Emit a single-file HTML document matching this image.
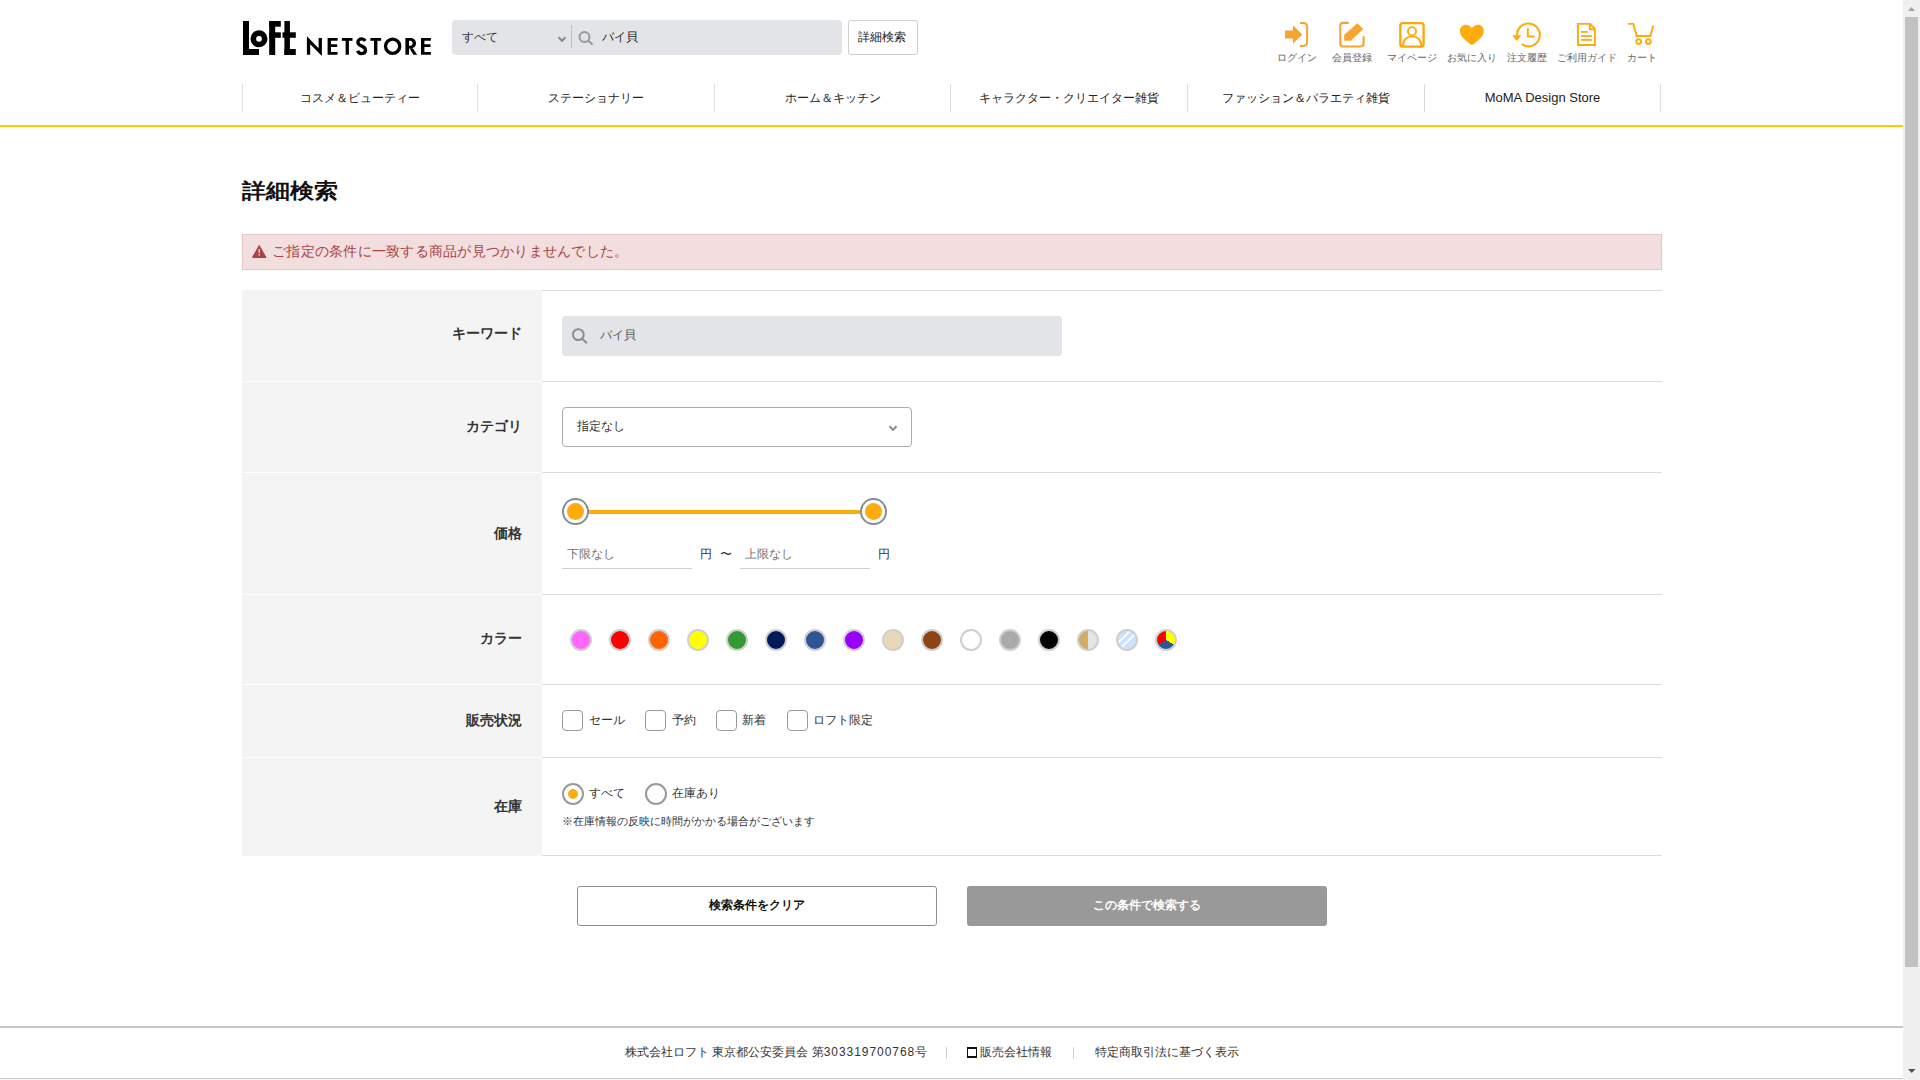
<!DOCTYPE html>
<html lang="ja"><head><meta charset="utf-8"><title>詳細検索</title>
<style>
*{box-sizing:border-box;margin:0;padding:0}
html,body{width:1920px;height:1080px;overflow:hidden;background:#fff}
body{position:relative;font-family:"Liberation Sans",sans-serif;color:#222}
.a{position:absolute}
.t{position:absolute;white-space:nowrap;line-height:20px}
svg{position:absolute;overflow:visible}
.nav-i{position:absolute;top:84px;height:28px;border-left:1px solid #dcdcdc}
.lbl{position:absolute;left:242px;width:300px;background:#f4f4f4}
.lt{position:absolute;right:1398px;font-size:14px;font-weight:bold;line-height:20px;color:#333;white-space:nowrap;text-align:right}
.rb{position:absolute;left:542px;width:1120px;height:1px;background:#dddddd}
.sw{position:absolute;top:629px;width:22px;height:22px;border-radius:50%;border:2px solid #cfcfcf;overflow:hidden}
.cb{position:absolute;top:710px;width:21px;height:21px;border:1.5px solid #9a9a9a;border-radius:4px;background:#fff}
.ct{font-size:12px;color:#333}
.fi{position:absolute;top:1046px}
</style></head><body>

<!-- scrollbar -->
<div class="a" style="left:1903px;top:0;width:17px;height:1080px;background:#f0f0f0"></div>
<div class="a" style="left:1905px;top:17px;width:13px;height:950px;background:#c1c1c1"></div>
<svg style="left:0;top:0" width="1920" height="1080">
  <polygon points="1908,11 1915,11 1911.5,7" fill="#a3a3a3"/>
  <polygon points="1908,1069 1915.5,1069 1911.75,1073" fill="#505050"/>
</svg>

<!-- logo -->
<svg style="left:0;top:0" width="440" height="70">
  <g fill="#000">
    <rect x="243" y="21" width="6" height="34"/>
    <rect x="243" y="49" width="16" height="6"/>
    <circle cx="259" cy="38.8" r="5.7" fill="none" stroke="#000" stroke-width="5.6"/>
    <rect x="269.2" y="21" width="6" height="34"/>
    <rect x="269.2" y="21" width="11.6" height="5.7"/>
    <rect x="269.2" y="32.3" width="11.6" height="5.5"/>
    <rect x="284.4" y="21" width="5.5" height="34"/>
    <rect x="282.5" y="32.3" width="13.3" height="5.5"/>
    <rect x="284.4" y="49" width="11.4" height="6"/>
    <!-- NETSTORE -->
    <polygon points="306.9,54.8 306.9,36.2 318.6,48.2 318.6,38 321.9,38 321.9,55.9 310.2,44.2 310.2,54.8"/>
    <polygon points="327.6,38 337.6,38 337.6,40.8 331,40.8 331,44.2 337.2,44.2 337.2,46.9 331,46.9 331,51.9 337.6,51.9 337.6,54.8 327.6,54.8"/>
    <rect x="341.9" y="38" width="10.6" height="2.8"/><rect x="345.6" y="38" width="3.3" height="16.8"/>
    <rect x="370.4" y="38" width="10.7" height="2.8"/><rect x="374" y="38" width="3.4" height="16.8"/>
    <circle cx="392.65" cy="46.25" r="7.1" fill="none" stroke="#000" stroke-width="3.3"/>
    <path d="M405.4,54.8 V38 H410.5 C414,38 416,40.3 416,43.2 C416,46.1 414,48.4 410.5,48.4 H409 V54.8 Z M409,40.8 V45.8 H410.3 C411.8,45.8 412.6,44.7 412.6,43.3 C412.6,41.9 411.8,40.8 410.3,40.8 Z" fill-rule="evenodd"/>
    <polygon points="409.5,48.2 412.8,48.2 417.2,54.8 413.4,54.8"/>
    <polygon points="421,38 430.9,38 430.9,40.8 424.4,40.8 424.4,44.2 430.5,44.2 430.5,46.9 424.4,46.9 424.4,51.9 430.9,51.9 430.9,54.8 421,54.8"/>
  </g>
  <path d="M365.3,40.8 C364.5,39.6 363.2,38.95 361.6,38.95 C359.4,38.95 357.9,40.4 357.9,42.3 C357.9,44.5 359.6,45.3 361.8,46.1 C364.2,47 365.45,48.2 365.45,50.3 C365.45,52.4 363.8,53.55 361.6,53.55 C359.6,53.55 358.2,52.4 357.7,50.8" fill="none" stroke="#000" stroke-width="3.3"/>
</svg>

<!-- search bar -->
<div class="a" style="left:452px;top:20px;width:390px;height:35px;background:#e3e4e8;border-radius:4px"></div>
<div class="t" style="left:462px;top:27px;font-size:12px;color:#333">すべて</div>
<div class="a" style="left:571px;top:25px;width:1px;height:23px;background:#bdbdbf"></div>
<div class="t" style="left:602px;top:27px;font-size:12px;color:#222">バイ貝</div>
<div class="a" style="left:848px;top:20px;width:70px;height:35px;background:#fff;border:1px solid #cfcfcf;border-radius:3px"></div>
<div class="t" style="left:858px;top:27px;font-size:12px;color:#222">詳細検索</div>
<svg style="left:0;top:0" width="1000" height="70">
  <polyline points="558.5,37.3 562,40.8 565.5,37.3" fill="none" stroke="#888" stroke-width="2"/>
  <circle cx="584.5" cy="36.9" r="5" fill="none" stroke="#999" stroke-width="2"/>
  <line x1="588.3" y1="40.7" x2="592.6" y2="44.6" stroke="#999" stroke-width="2"/>
</svg>

<!-- header icons -->
<svg style="left:0;top:0" width="1700" height="70">
  <g fill="#f5a52f">
    <rect x="1285" y="30.5" width="8.5" height="8"/>
    <polygon points="1293,25.3 1302.3,34.5 1293,43.7"/>
  </g>
  <path d="M1300,22.9 H1303 Q1307.1,22.9 1307.1,27 V41.9 Q1307.1,46 1303,46 H1300" fill="none" stroke="#f5a52f" stroke-width="2"/>
  <path d="M1348.8,22.9 H1343.2 Q1340.3,22.9 1340.3,25.8 V43.6 Q1340.3,46.5 1343.2,46.5 H1360.7 Q1363.6,46.5 1363.6,43.6 V36.3" fill="none" stroke="#f5a52f" stroke-width="2.1"/>
  <polygon points="1357.4,23.2 1363.2,28.9 1350.7,40.7 1344.2,40.7 1344.2,34.8" fill="#f5a52f"/>
  <rect x="1400.3" y="23.1" width="23.3" height="23.6" rx="2.5" fill="none" stroke="#ffa602" stroke-width="2.3"/>
  <circle cx="1412" cy="31.2" r="4.1" fill="none" stroke="#ffa602" stroke-width="1.8"/>
  <path d="M1403,46 C1403,40 1407,36.4 1412.2,36.4 C1417.4,36.4 1421.4,40 1421.4,46" fill="none" stroke="#ffa602" stroke-width="1.9"/>
  <path d="M1471.9,28.2 C1470.5,26 1468.3,24.7 1465.8,24.7 C1462.5,24.7 1459.9,27.3 1459.9,31 C1459.9,34.5 1462,37 1465,39.8 L1470,44 C1471.1,44.9 1472.7,44.9 1473.8,44 L1478.8,39.8 C1481.8,37 1483.8,34.5 1483.8,31 C1483.8,27.3 1481.2,24.7 1478,24.7 C1475.5,24.7 1473.3,26 1471.9,28.2 Z" fill="#ffaa0d"/>
  <path d="M1517.05,35.5 A11.4,11.4 0 1 1 1521.8,44.2" fill="none" stroke="#ffaa0d" stroke-width="2.1"/>
  <polygon points="1512.2,35.2 1521.3,35.2 1516.6,40.9" fill="#ffaa0d"/>
  <polyline points="1527.9,28 1527.9,36.5 1534.7,36.5" fill="none" stroke="#ffaa0d" stroke-width="1.9"/>
  <path d="M1577.95,23.85 H1590 L1594.85,28.6 V44.95 H1577.95 Z" fill="none" stroke="#ffaa0d" stroke-width="1.9" stroke-linejoin="miter"/>
  <path d="M1590,23.9 V29.2 H1595" fill="none" stroke="#ffaa0d" stroke-width="1.9"/>
  <g stroke="#ffaa0d" stroke-width="1.8">
    <line x1="1581" y1="31.9" x2="1587.8" y2="31.9"/>
    <line x1="1581" y1="36" x2="1591.8" y2="36"/>
    <line x1="1581" y1="39.9" x2="1591.8" y2="39.9"/>
  </g>
  <polyline points="1628.1,23.9 1633.3,23.9 1636.8,36.05 1650.4,36.05 1653.2,25.5" fill="none" stroke="#ffaa0d" stroke-width="1.9"/>
  <circle cx="1638.7" cy="41.6" r="2.4" fill="none" stroke="#ffaa0d" stroke-width="1.9"/>
  <circle cx="1648.4" cy="41.6" r="2.4" fill="none" stroke="#ffaa0d" stroke-width="1.9"/>
</svg>
<div class="t" style="left:1277px;top:48px;font-size:10px;color:#666">ログイン</div>
<div class="t" style="left:1332px;top:48px;font-size:10px;color:#666">会員登録</div>
<div class="t" style="left:1387px;top:48px;font-size:10px;color:#666">マイページ</div>
<div class="t" style="left:1447px;top:48px;font-size:10px;color:#666">お気に入り</div>
<div class="t" style="left:1507px;top:48px;font-size:10px;color:#666">注文履歴</div>
<div class="t" style="left:1557px;top:48px;font-size:10px;color:#666">ご利用ガイド</div>
<div class="t" style="left:1627px;top:48px;font-size:10px;color:#666">カート</div>

<!-- nav -->
<div class="a" style="left:242px;top:84px;width:1px;height:28px;background:#dcdcdc"></div>
<div class="a" style="left:477px;top:84px;width:1px;height:28px;background:#dcdcdc"></div>
<div class="a" style="left:714px;top:84px;width:1px;height:28px;background:#dcdcdc"></div>
<div class="a" style="left:950px;top:84px;width:1px;height:28px;background:#dcdcdc"></div>
<div class="a" style="left:1187px;top:84px;width:1px;height:28px;background:#dcdcdc"></div>
<div class="a" style="left:1424px;top:84px;width:1px;height:28px;background:#dcdcdc"></div>
<div class="a" style="left:1660px;top:84px;width:1px;height:28px;background:#dcdcdc"></div>
<div class="t" style="left:243px;width:234px;top:88px;font-size:12px;text-align:center;color:#222">コスメ＆ビューティー</div>
<div class="t" style="left:478px;width:236px;top:88px;font-size:12px;text-align:center;color:#222">ステーショナリー</div>
<div class="t" style="left:715px;width:235px;top:88px;font-size:12px;text-align:center;color:#222">ホーム＆キッチン</div>
<div class="t" style="left:951px;width:236px;top:88px;font-size:12px;text-align:center;color:#222">キャラクター・クリエイター雑貨</div>
<div class="t" style="left:1188px;width:236px;top:88px;font-size:12px;text-align:center;color:#222">ファッション＆バラエティ雑貨</div>
<div class="t" style="left:1425px;width:235px;top:88px;font-size:13px;text-align:center;color:#222">MoMA Design Store</div>
<div class="a" style="left:0;top:125px;width:1903px;height:2px;background:#fdca00"></div>

<!-- heading -->
<div class="t" style="left:242px;top:173px;font-size:24px;line-height:40px;font-weight:bold;color:#111;transform:scaleY(0.875);transform-origin:0 0">詳細検索</div>

<!-- alert -->
<div class="a" style="left:242px;top:234px;width:1420px;height:36px;background:#f2dede;border:1px solid #e6c3c6"></div>
<svg style="left:0;top:0" width="300" height="300">
  <path d="M259.2,245.5 L266,257.5 H252.5 Z" fill="#a94442" stroke="#a94442" stroke-width="1" stroke-linejoin="round"/>
  <rect x="258.6" y="249" width="1.3" height="4.2" fill="#f2dede"/>
  <rect x="258.6" y="254.2" width="1.3" height="1.4" fill="#f2dede"/>
</svg>
<div class="t" style="left:272px;top:241px;font-size:14px;color:#a94442;letter-spacing:0.25px">ご指定の条件に一致する商品が見つかりませんでした。</div>

<!-- table -->
<div class="lbl" style="top:290px;height:91px"></div>
<div class="lbl" style="top:382px;height:90px"></div>
<div class="lbl" style="top:473px;height:121px"></div>
<div class="lbl" style="top:595px;height:89px"></div>
<div class="lbl" style="top:685px;height:72px"></div>
<div class="lbl" style="top:758px;height:98px"></div>
<div class="rb" style="top:290px"></div>
<div class="rb" style="top:381px"></div>
<div class="rb" style="top:472px"></div>
<div class="rb" style="top:594px"></div>
<div class="rb" style="top:684px"></div>
<div class="rb" style="top:757px"></div>
<div class="rb" style="top:855px"></div>

<div class="lt" style="top:323px">キーワード</div>
<div class="lt" style="top:416px">カテゴリ</div>
<div class="lt" style="top:523px">価格</div>
<div class="lt" style="top:628px">カラー</div>
<div class="lt" style="top:710px">販売状況</div>
<div class="lt" style="top:796px">在庫</div>

<!-- keyword -->
<div class="a" style="left:562px;top:316px;width:500px;height:40px;background:#e3e4e8;border-radius:4px"></div>
<svg style="left:0;top:0" width="700" height="400">
  <circle cx="578.3" cy="334.6" r="5.4" fill="none" stroke="#8c8c8c" stroke-width="2"/>
  <line x1="582.2" y1="338.6" x2="586.8" y2="343.3" stroke="#8c8c8c" stroke-width="2"/>
</svg>
<div class="t" style="left:600px;top:325px;font-size:12px;color:#555">バイ貝</div>

<!-- category -->
<div class="a" style="left:562px;top:407px;width:350px;height:40px;background:#fff;border:1px solid #ababab;border-radius:4px"></div>
<div class="t" style="left:577px;top:416px;font-size:12px;color:#333">指定なし</div>
<svg style="left:0;top:0" width="950" height="500">
  <polyline points="889.5,426.3 893,429.9 896.5,426.3" fill="none" stroke="#8a8a8a" stroke-width="2"/>
</svg>

<!-- price -->
<div class="a" style="left:588px;top:510px;width:272px;height:4px;background:#ffab0c"></div>
<div class="a" style="left:562px;top:498px;width:26.5px;height:26.5px;border-radius:50%;border:2px solid #8c8c8c;background:#fff"></div>
<div class="a" style="left:567px;top:503px;width:17px;height:17px;border-radius:50%;background:#ffab0c"></div>
<div class="a" style="left:860px;top:498px;width:26.5px;height:26.5px;border-radius:50%;border:2px solid #8c8c8c;background:#fff"></div>
<div class="a" style="left:865px;top:503px;width:17px;height:17px;border-radius:50%;background:#ffab0c"></div>
<div class="t" style="left:567px;top:544px;font-size:12px;color:#707070">下限なし</div>
<div class="a" style="left:562px;top:568px;width:130px;height:1px;background:#cfcfcf"></div>
<div class="t" style="left:700px;top:544px;font-size:12px;color:#333">円</div>
<div class="t" style="left:720px;top:544px;font-size:12px;color:#333">〜</div>
<div class="t" style="left:745px;top:544px;font-size:12px;color:#707070">上限なし</div>
<div class="a" style="left:740px;top:568px;width:130px;height:1px;background:#cfcfcf"></div>
<div class="t" style="left:878px;top:544px;font-size:12px;color:#333">円</div>

<!-- colors -->
<div class="sw" style="left:570px;background:#ff66ff"></div>
<div class="sw" style="left:609px;background:#ff0000"></div>
<div class="sw" style="left:648px;background:#ff6600"></div>
<div class="sw" style="left:687px;background:#ffff00"></div>
<div class="sw" style="left:726px;background:#339933"></div>
<div class="sw" style="left:765px;background:#001a57"></div>
<div class="sw" style="left:804px;background:#2f5597"></div>
<div class="sw" style="left:843px;background:#9900ff"></div>
<div class="sw" style="left:882px;background:#e8d8b8"></div>
<div class="sw" style="left:921px;background:#8b4513"></div>
<div class="sw" style="left:960px;background:#ffffff"></div>
<div class="sw" style="left:999px;background:#aaaaaa"></div>
<div class="sw" style="left:1038px;background:#000000"></div>
<div class="sw" style="left:1077px;background:linear-gradient(90deg,#d3ab62 50%,#e4e4e4 50%)"></div>
<div class="sw" style="left:1116px;background:linear-gradient(135deg,#cfe0fa 30%,#f4f8ff 30%,#f4f8ff 38%,#cfe0fa 38%,#cfe0fa 52%,#f4f8ff 52%,#f4f8ff 60%,#cfe0fa 60%)"></div>
<div class="sw" style="left:1155px;background:conic-gradient(#ffff00 0deg 120deg,#2f5597 120deg 240deg,#ff0000 240deg 360deg)"></div>

<!-- sales status -->
<div class="cb" style="left:562px"></div>
<div class="t ct" style="left:589px;top:710px">セール</div>
<div class="cb" style="left:645px"></div>
<div class="t ct" style="left:672px;top:710px">予約</div>
<div class="cb" style="left:716px"></div>
<div class="t ct" style="left:742px;top:710px">新着</div>
<div class="cb" style="left:787px"></div>
<div class="t ct" style="left:813px;top:710px">ロフト限定</div>

<!-- stock -->
<div class="a" style="left:562px;top:783px;width:22px;height:22px;border-radius:50%;border:2px solid #999;background:#fff"></div>
<div class="a" style="left:568px;top:789px;width:10px;height:10px;border-radius:50%;background:#ffab0c"></div>
<div class="t ct" style="left:589px;top:783px">すべて</div>
<div class="a" style="left:645px;top:783px;width:22px;height:22px;border-radius:50%;border:2px solid #999;background:#fff"></div>
<div class="t ct" style="left:672px;top:783px">在庫あり</div>
<div class="t" style="left:562px;top:811px;font-size:11px;color:#333">※在庫情報の反映に時間がかかる場合がございます</div>

<!-- buttons -->
<div class="a" style="left:577px;top:886px;width:360px;height:40px;background:#fff;border:1px solid #8f8f8f;border-radius:3px"></div>
<div class="t" style="left:577px;width:360px;top:895px;font-size:12px;font-weight:bold;text-align:center;color:#111">検索条件をクリア</div>
<div class="a" style="left:967px;top:886px;width:360px;height:40px;background:#999999;border-radius:3px"></div>
<div class="t" style="left:967px;width:360px;top:895px;font-size:12px;font-weight:bold;text-align:center;color:#fff">この条件で検索する</div>

<!-- footer -->
<div class="a" style="left:0;top:1026px;width:1903px;height:2px;background:#c6c6c6"></div>
<div class="a" style="left:0;top:1078px;width:1903px;height:1px;background:#cccccc"></div>
<div class="a" style="left:0;top:1079px;width:1903px;height:1px;background:#f7f7f7"></div>
<div class="t" style="left:625px;top:1042px;font-size:12px;color:#333">株式会社ロフト 東京都公安委員会 第<span style="letter-spacing:0.95px">303319700768</span>号</div>
<div class="a" style="left:946px;top:1047px;width:1px;height:12px;background:#d0d0d0"></div>
<div class="a" style="left:967px;top:1047px;width:10px;height:11px;border:1.6px solid #111;border-top-width:2px;border-bottom-width:2.2px"></div>
<div class="t" style="left:980px;top:1042px;font-size:12px;color:#333">販売会社情報</div>
<div class="a" style="left:1073px;top:1047px;width:1px;height:12px;background:#d0d0d0"></div>
<div class="t" style="left:1095px;top:1042px;font-size:12px;color:#333">特定商取引法に基づく表示</div>

</body></html>
